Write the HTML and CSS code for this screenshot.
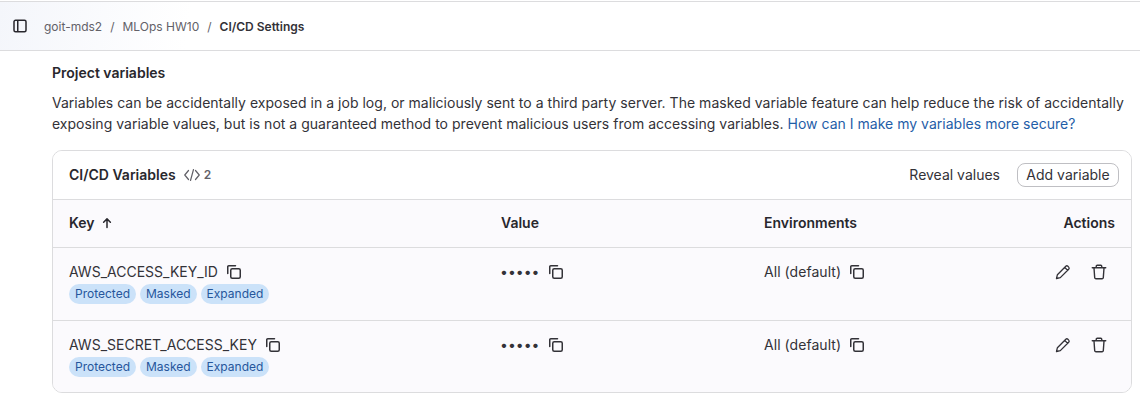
FILE: index.html
```html
<!DOCTYPE html>
<html lang="en">
<head>
    <meta charset="UTF-8">
    <title>CI/CD Settings</title>
    <link rel="stylesheet" href="styles.css">
</head>
<body>
    <svg class="defs" width="0" height="0">
        <symbol id="copy" viewBox="0 0 16 16">
            <path d="M1.75 9.5V2.75a1 1 0 0 1 1-1H9.5" fill="none" stroke="currentColor" stroke-width="1.5" stroke-linecap="round"/>
            <rect x="4.75" y="4.75" width="9.5" height="9.5" rx="1.5" fill="none" stroke="currentColor" stroke-width="1.5"/>
        </symbol>
        <symbol id="pencil" viewBox="0 0 16 16">
            <path d="M1.5 14.5l.9-3.8 8.4-8.4a1.5 1.5 0 0 1 2.1 0l.8.8a1.5 1.5 0 0 1 0 2.1l-8.4 8.4zM9.7 3.4l2.9 2.9" fill="none" stroke="currentColor" stroke-width="1.3" stroke-linejoin="round"/>
        </symbol>
        <symbol id="trash" viewBox="0 0 16 16">
            <path d="M1.25 3.75h13.5M5.25 3.5V2.25a1 1 0 0 1 1-1h3.5a1 1 0 0 1 1 1V3.5M3 4l.7 9.6a1.3 1.3 0 0 0 1.3 1.15h6a1.3 1.3 0 0 0 1.3-1.15L13 4" fill="none" stroke="currentColor" stroke-width="1.4" stroke-linecap="round"/>
        </symbol>
    </svg>

    <header class="topbar">
        <svg class="panel-icon" viewBox="0 0 16 16">
            <rect x="2" y="2.25" width="12" height="11.5" rx="1.5" fill="none" stroke="currentColor" stroke-width="1.5"/>
            <path d="M5.75 2.5v11" stroke="currentColor" stroke-width="1.5"/>
        </svg>
        <nav class="crumbs">
            <span>goit-mds2</span><span class="sep">/</span>
            <span>MLOps HW10</span><span class="sep">/</span>
            <b>CI/CD Settings</b>
        </nav>
    </header>

    <main class="content">
        <h2>Project variables</h2>
        <p class="intro">Variables can be accidentally exposed in a job log, or maliciously sent to a third party server. The masked variable feature can help reduce the risk of accidentally exposing variable values, but is not a guaranteed method to prevent malicious users from accessing variables. <a href="#">How can I make my variables more secure?</a></p>

        <section class="card">
            <div class="card-head">
                <strong>CI/CD Variables</strong>
                <span class="count">
                    <svg class="code-icon" viewBox="0 0 16 16"><path d="M4.5 3.5L.75 8l3.75 4.5M11.5 3.5L15.25 8l-3.75 4.5M9.5 2.5l-3 11" fill="none" stroke="currentColor" stroke-width="1.2" stroke-linecap="round" stroke-linejoin="round"/></svg>
                    2
                </span>
                <span class="reveal">Reveal values</span>
                <button class="add">Add variable</button>
            </div>

            <div class="row head">
                <div>Key <svg class="arrow" viewBox="0 0 16 16"><path d="M8 14V2.5M3.5 7L8 2.5 12.5 7" fill="none" stroke="currentColor" stroke-width="2" stroke-linecap="round" stroke-linejoin="round"/></svg></div>
                <div>Value</div>
                <div>Environments</div>
                <div class="right">Actions</div>
            </div>

            <div class="row item">
                <div>
                    <div class="line">AWS_ACCESS_KEY_ID <svg class="icon"><use href="#copy"/></svg></div>
                    <div class="badges"><span>Protected</span><span>Masked</span><span>Expanded</span></div>
                </div>
                <div class="line"><span class="dots">•••••</span> <svg class="icon"><use href="#copy"/></svg></div>
                <div class="line env">All (default) <svg class="icon"><use href="#copy"/></svg></div>
                <div class="line acts"><svg class="icon"><use href="#pencil"/></svg><svg class="icon"><use href="#trash"/></svg></div>
            </div>

            <div class="row item">
                <div>
                    <div class="line">AWS_SECRET_ACCESS_KEY <svg class="icon"><use href="#copy"/></svg></div>
                    <div class="badges"><span>Protected</span><span>Masked</span><span>Expanded</span></div>
                </div>
                <div class="line"><span class="dots">•••••</span> <svg class="icon"><use href="#copy"/></svg></div>
                <div class="line env">All (default) <svg class="icon"><use href="#copy"/></svg></div>
                <div class="line acts"><svg class="icon"><use href="#pencil"/></svg><svg class="icon"><use href="#trash"/></svg></div>
            </div>
        </section>
    </main>
</body>
</html>
```

FILE: styles.css
```css
html, body {
    margin: 0;
    height: 401px;
    overflow: hidden;
}

body {
    background: #fff;
    color: #333238;
    font-family: Inter, "Liberation Sans", sans-serif;
    font-size: 14px;
    line-height: 20px;
}

.defs {
    position: absolute;
}

.topbar {
    height: 48px;
    margin-top: 1px;
    border-top: 1px solid #dcdcde;
    border-bottom: 1px solid #dcdcde;
    display: flex;
    align-items: center;
    padding-left: 12px;
    background: linear-gradient(100deg, #f4f6fb 0, #fff 190px);
}

.panel-icon {
    width: 16px;
    height: 16px;
    color: #28272d;
}

.crumbs {
    margin-left: 16px;
    padding-top: 2px;
    font-size: 12px;
    color: #626168;
    display: flex;
    gap: 4px;
}

.crumbs .sep {
    margin: 0 4px;
}

.crumbs b {
    color: #333238;
    font-weight: 600;
}

.content {
    padding: 12px 8px 0 52px;
}

h2 {
    margin: 0;
    font-size: 14px;
    font-weight: 600;
    line-height: 20px;
    color: #28272d;
}

.intro {
    margin: 9px 0 16px;
    line-height: 21px;
    letter-spacing: 0.02px;
}

.intro a {
    color: #1f5ea8;
    text-decoration: none;
}

.card {
    border: 1px solid #dcdcde;
    border-radius: 10px;
    overflow: hidden;
}

.card-head {
    height: 48px;
    padding: 0 12px 0 16px;
    display: flex;
    align-items: center;
    background: #fff;
}

.card-head strong {
    font-weight: 600;
    color: #28272d;
}

.count {
    margin-left: 8px;
    display: flex;
    align-items: center;
    gap: 4px;
    font-size: 12px;
    font-weight: 600;
    color: #626168;
}

.code-icon {
    width: 16px;
    height: 16px;
}

.reveal {
    margin-left: auto;
    margin-right: 17px;
}

.add {
    height: 24px;
    width: 102px;
    padding: 0;
    background: #fff;
    border: 1px solid #bfbfc3;
    border-radius: 8px;
    color: #333238;
    font: inherit;
}

.row {
    display: grid;
    grid-template-columns: 432px 263px 1fr 120px;
    padding: 0 16px;
    background: #fbfafd;
    border-top: 1px solid #dcdcde;
}

.head {
    height: 47px;
    box-sizing: content-box;
    align-items: center;
    font-weight: 600;
    color: #28272d;
}

.head > div {
    margin-top: -2px;
}

.arrow {
    width: 12px;
    height: 12px;
    margin-left: 3px;
    vertical-align: -1px;
}

.right {
    text-align: right;
}

.item {
    height: 73px;
    padding-top: 14px;
    box-sizing: border-box;
}

.item:last-child {
    height: 72px;
}

.line {
    display: flex;
    align-items: center;
    gap: 8px;
    height: 20px;
}

.env {
    letter-spacing: 0.05px;
}

.icon {
    width: 16px;
    height: 16px;
    color: #333238;
}

.dots {
    margin-left: -1px;
    margin-right: 1px;
    font-size: 14px;
}

.acts {
    justify-content: flex-end;
    gap: 20px;
    padding-right: 8px;
}

.badges {
    display: flex;
    gap: 4px;
    margin-top: 2px;
}

.badges span {
    height: 20px;
    padding: 0 6px;
    border-radius: 10px;
    background: #cbe2f9;
    color: #26569c;
    font-size: 12px;
    line-height: 20px;
}
```
